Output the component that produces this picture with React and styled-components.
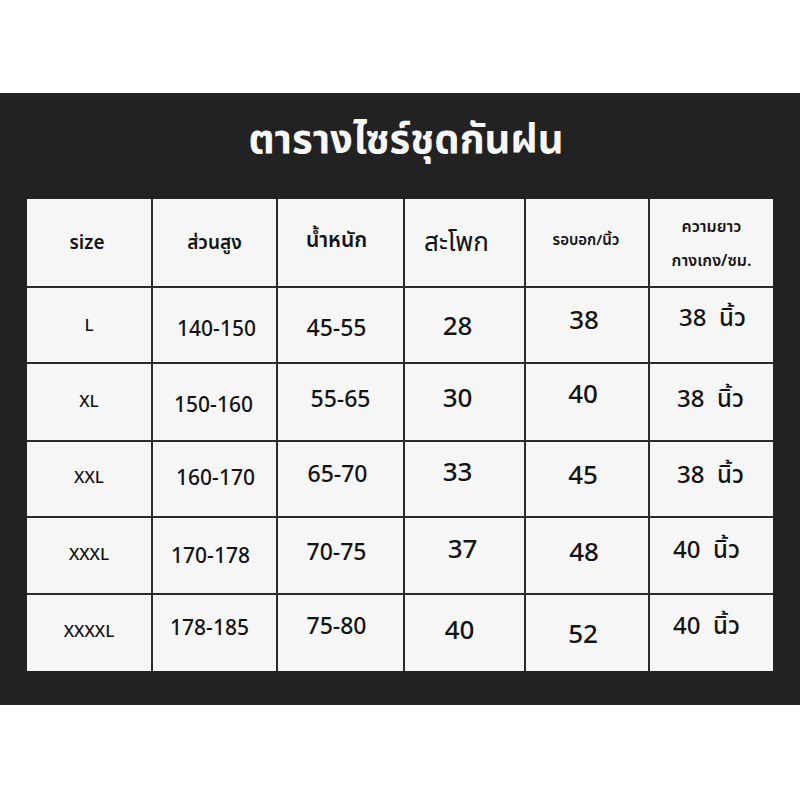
import React from 'react';
import styled, { createGlobalStyle } from 'styled-components';

const GlobalStyle = createGlobalStyle`
  html, body {
    margin: 0;
    padding: 0;
    background: #ffffff;
  }
  body {
    font-family: "Noto Sans Thai", "Noto Sans", "DejaVu Sans", sans-serif;
  }
`;

const Page = styled.div`
  width: 800px;
  height: 800px;
  display: flex;
  flex-direction: column;
  padding-top: 93px;
  box-sizing: border-box;
`;

const Board = styled.div`
  width: 800px;
  height: 612px;
  background: #222222;
  display: flex;
  flex-direction: column;
  align-items: flex-start;
  box-sizing: border-box;
`;

const Title = styled.h1`
  margin: 0;
  width: 100%;
  height: 106px;
  display: flex;
  align-items: center;
  justify-content: center;
  padding: 0 0 10px 12px;
  box-sizing: border-box;
  color: #f7f7f7;
  font-size: 40px;
  font-weight: 700;
`;

const Grid = styled.div`
  margin-left: 27px;
  display: grid;
  grid-template-columns: 124px 123px 125px 119px 122px 123px;
  grid-template-rows: 87px 74px 76px 74px 75px 76px;
  gap: 2px;
  background: #2b2b2b;
`;

const Cell = styled.div`
  background: #f6f6f6;
  display: flex;
  flex-direction: column;
  align-items: center;
  justify-content: center;
  color: #141414;
  font-size: ${(p) => p.size}px;
  font-weight: ${(p) => p.weight || 500};
  line-height: 1.25;
  text-align: center;
  white-space: pre;

  & > span {
    transform: translate(${(p) => p.dx || 0}px, ${(p) => p.dy || 0}px);
  }
`;

const HeadLine = styled.span`
  display: block;
  line-height: 34px;
`;

const headers = [
  { t: 'size', size: 19, weight: 600, dx: -2, dy: 1 },
  { t: 'ส่วนสูง', size: 19, weight: 600, dx: 0, dy: 1 },
  { t: 'น้ำหนัก', size: 21, weight: 600, dx: -4, dy: -1 },
  { t: 'สะโพก', size: 26, weight: 400, dx: -8, dy: 1 },
  { t: 'รอบอก/นิ้ว', size: 15, weight: 600, dx: -1, dy: -1 },
];

const colSizes = [17, 21, 23, 26, 26, 24];

const rows = [
  [['L', 0, 2], ['140-150', 2, 5], ['45-55', -4, 4], ['28', -7, 2], ['38', -3, -4], ['38  นิ้ว', 1, -6]],
  [['XL', 0, 1], ['150-160', -1, 4], ['55-65', 0, -2], ['30', -7, -3], ['40', -4, -7], ['38  นิ้ว', -1, -2]],
  [['XXL', 0, 0], ['160-170', 1, 0], ['65-70', -3, -4], ['33', -7, -6], ['45', -4, -3], ['38  นิ้ว', -1, -3]],
  [['XXXL', 0, 0], ['170-178', -4, 2], ['70-75', -4, -2], ['37', -2, -5], ['48', -3, -2], ['40  นิ้ว', -5, -5]],
  [['XXXXL', 0, 0], ['178-185', -5, -4], ['75-80', -4, -6], ['40', -5, -2], ['52', -4, 2], ['40  นิ้ว', -5, -6]],
];

const App = () => {
  return (
    <>
      <GlobalStyle />
      <Page>
        <Board>
          <Title>ตารางไซร์ชุดกันฝน</Title>
          <Grid>
            {headers.map((h) => (
              <Cell key={h.t} size={h.size} weight={h.weight} dx={h.dx} dy={h.dy}>
                <span>{h.t}</span>
              </Cell>
            ))}
            <Cell size={16} weight={600} dy={1}>
              <span>
                <HeadLine>ความยาว</HeadLine>
                <HeadLine>กางเกง/ซม.</HeadLine>
              </span>
            </Cell>
            {rows.map((row, r) =>
              row.map(([text, dx, dy], c) => (
                <Cell key={`${r}-${c}`} size={colSizes[c]} dx={dx} dy={dy}>
                  <span>{text}</span>
                </Cell>
              ))
            )}
          </Grid>
        </Board>
      </Page>
    </>
  );
};

export default App;
